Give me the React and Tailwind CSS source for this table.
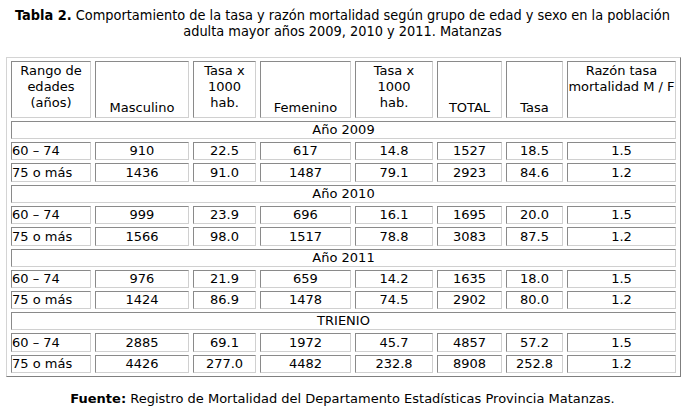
import React from 'react';

const rows = [
  { group: 'Año 2009' },
  { r: '60 – 74', m: '910', tm: '22.5', f: '617', tf: '14.8', t: '1527', tt: '18.5', razon: '1.5', h: 'h-[18px]' },
  { r: '75 o más', m: '1436', tm: '91.0', f: '1487', tf: '79.1', t: '2923', tt: '84.6', razon: '1.2', h: 'h-[19px]' },
  { group: 'Año 2010' },
  { r: '60 – 74', m: '999', tm: '23.9', f: '696', tf: '16.1', t: '1695', tt: '20.0', razon: '1.5', h: 'h-[18px]' },
  { r: '75 o más', m: '1566', tm: '98.0', f: '1517', tf: '78.8', t: '3083', tt: '87.5', razon: '1.2', h: 'h-[19px]' },
  { group: 'Año 2011' },
  { r: '60 – 74', m: '976', tm: '21.9', f: '659', tf: '14.2', t: '1635', tt: '18.0', razon: '1.5', h: 'h-[18px]' },
  { r: '75 o más', m: '1424', tm: '86.9', f: '1478', tf: '74.5', t: '2902', tt: '80.0', razon: '1.2', h: 'h-[18px]' },
  { group: 'TRIENIO' },
  { r: '60 – 74', m: '2885', tm: '69.1', f: '1972', tf: '45.7', t: '4857', tt: '57.2', razon: '1.5', h: 'h-[19px]' },
  { r: '75 o más', m: '4426', tm: '277.0', f: '4482', tf: '232.8', t: '8908', tt: '252.8', razon: '1.2', h: 'h-[18px]' },
];

// inset cell border, like an old border="1" table
const cell =
  'border border-t-[#8a8a8a] border-l-[#8a8a8a] border-b-[#d0d0d0] border-r-[#d0d0d0] p-0 font-normal';

export default function App() {
  return (
    <div className="w-[685px] h-[413px] bg-white text-black font-['DejaVu_Sans',Verdana,sans-serif] text-[13px] leading-4">
      {/* --- Title --- */}
      <p className="pt-[7px] text-center whitespace-nowrap font-['DejaVu_Sans_Condensed','Liberation_Sans',sans-serif] text-[14.4px] leading-4">
        <b>Tabla 2.</b> Comportamiento de la tasa y razón mortalidad según grupo de edad y sexo en la población
        <br />
        adulta mayor años 2009, 2010 y 2011. Matanzas
      </p>

      {/* --- Table --- */}
      <table className="mt-[18px] ml-[6px] w-[675px] table-fixed border-separate border-spacing-x-[4px] border-spacing-y-[3px] border border-t-[#d4d4d4] border-l-[#d4d4d4] border-b-[#7f7f7f] border-r-[#7f7f7f]">
        <tbody>
          <tr className="h-[57px]">
            <td className={`${cell} w-[80px] align-top text-center pt-[1px]`}>
              Rango de
              <br />
              edades
              <br />
              (años)
            </td>
            <td className={`${cell} w-[94px] align-bottom text-center pb-[1px]`}>Masculino</td>
            <td className={`${cell} w-[63px] align-top text-center pt-[1px]`}>
              Tasa x
              <br />
              1000
              <br />
              hab.
            </td>
            <td className={`${cell} w-[91px] align-bottom text-center pb-[1px]`}>Femenino</td>
            <td className={`${cell} w-[78px] align-top text-center pt-[1px]`}>
              Tasa x
              <br />
              1000
              <br />
              hab.
            </td>
            <td className={`${cell} w-[65px] align-bottom text-center pb-[1px]`}>TOTAL</td>
            <td className={`${cell} w-[57px] align-bottom text-center pb-[1px]`}>Tasa</td>
            <td className={`${cell} w-[109px] align-top text-center pt-[1px]`}>
              Razón tasa
              <br />
              mortalidad M / F
            </td>
          </tr>

          {rows.map((row, i) =>
            row.group ? (
              <tr key={i} className="h-[18px]">
                <td colSpan={8} className={`${cell} text-center`}>
                  {row.group}
                </td>
              </tr>
            ) : (
              <tr key={i} className={row.h}>
                <td className={`${cell} text-left`}>{row.r}</td>
                <td className={`${cell} text-center`}>{row.m}</td>
                <td className={`${cell} text-center`}>{row.tm}</td>
                <td className={`${cell} text-center`}>{row.f}</td>
                <td className={`${cell} text-center`}>{row.tf}</td>
                <td className={`${cell} text-center`}>{row.t}</td>
                <td className={`${cell} text-center`}>{row.tt}</td>
                <td className={`${cell} text-center`}>{row.razon}</td>
              </tr>
            )
          )}
        </tbody>
      </table>

      {/* --- Source --- */}
      <p className="mt-[14px] text-center whitespace-nowrap">
        <b>Fuente:</b> Registro de Mortalidad del Departamento Estadísticas Provincia Matanzas.
      </p>
    </div>
  );
}
